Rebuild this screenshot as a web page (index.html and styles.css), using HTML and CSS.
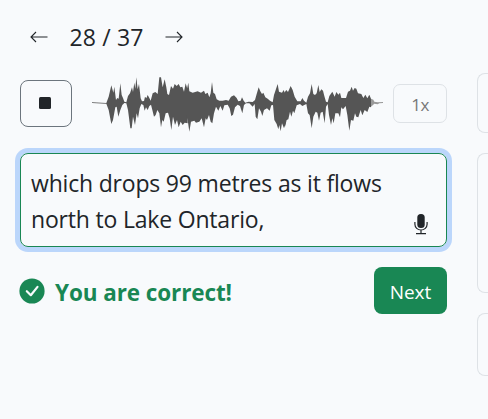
FILE: index.html
```html
<!DOCTYPE html>
<html lang="en">
<head>
<meta charset="utf-8">
<title>Dictation</title>
<link rel="stylesheet" href="styles.css">
</head>
<body>
<div class="page">
  <main class="exercise">
    <nav class="pager">
      <svg class="arrow" viewBox="0 0 18 12"><path d="M17.5 6H1M6 1L1 6l5 5"/></svg>
      <span class="count">28 / 37</span>
      <svg class="arrow" viewBox="0 0 18 12"><path d="M.5 6H17M12 1l5 5-5 5"/></svg>
    </nav>
    <div class="player">
      <button class="stop" aria-label="Stop"><span class="square"></span></button>
      <svg class="wave" viewBox="0 0 900 198">
        <path d="M12 97L55 99 62 80 70 46 76 68 79 50 84 90 88 84 92 86 97 40 101 75 105 84 109 95 115 97 120 78 126 70 132 52 135 66 139 38 142 56 145 22 149 58 153 42 158 85 162 94 168 93 171 80 175 85 179 75 184 84 188 92 194 70 202 66 209 72 214 22 219 22 224 52 230 28 235 52 238 72 243 75 249 48 255 56 260 42 266 48 272 42 277 52 283 50 288 65 293 40 299 60V160L290 158 284 165 278 155 272 172 267 150 261 165 255 140 250 180 245 145 240 128 233 130 227 155 223 150 219 172 214 130 208 120 203 135 198 140 193 120 189 104 184 108 179 120 174 112 170 122 166 105 160 102 155 115 150 145 146 130 141 165 135 140 131 175 127 175 120 120 115 100 109 99 103 105 97 120 91 140 86 110 82 112 75 150 70 162 62 120 55 101 12 99Z"/>
        <path transform="translate(294 0)" d="M0 70L7 38 10 64 20 68 35 64 45 68 54 62 58 72 65 68 70 82 74 70 78 36 82 68 87 72 92 88 100 92 110 92 120 90 128 92 135 80 144 76 152 84 157 94 164 92 168 82 173 92 178 98 188 95 200 96 207 90 212 72 218 52 223 64 228 72 232 68 238 82 245 86 252 92 260 97 264 75 269 60 275 42 279 65 288 68 293 60 299 75V160L294 175 288 160 284 184 280 165 277 178 272 162 265 150 261 105 256 106 251 122 243 115 234 120 229 138 225 125 219 115 214 148 209 140 206 102 200 110 190 100 180 100 174 105 169 130 162 108 155 104 147 112 141 134 136 138 131 115 125 104 115 106 110 122 103 108 97 122 90 110 84 130 79 160 74 155 69 135 63 150 59 145 54 172 47 145 40 155 30 158 25 152 15 155 10 185 5 150 0 135Z"/>
        <path transform="translate(588 0)" d="M0 70L7 60 12 66 20 48 26 60 32 80 40 94 50 94 55 84 60 92 67 98 72 80 78 70 83 42 88 72 93 75 98 70 103 45 107 66 112 58 117 62 121 78 126 95 131 97 136 78 145 65 152 80 157 66 163 74 168 68 172 84 186 84 192 65 198 62 203 50 207 62 212 54 217 56 222 70 232 72 238 84 244 74 250 85 256 74 261 86V112L256 110 250 126 242 120 235 136 230 120 223 142 217 140 213 130 208 152 201 150 196 182 190 135 185 108 177 118 172 112 168 142 163 130 154 130 149 160 145 145 141 165 135 135 131 102 126 110 122 160 116 125 110 128 105 152 100 128 95 125 88 140 83 175 77 135 72 130 67 102 55 108 48 102 38 106 31 130 27 122 22 140 18 125 13 148 8 150 3 170 0 165Z"/>
        <path class="pending" transform="translate(588 0)" d="M261 86L268 89 271 95 281 97 297 96V99L286 100 281 103 271 101 267 105 261 110Z"/>
      </svg>
      <button class="speed">1x</button>
    </div>
    <div class="answer">
      <p class="text">which drops 99 metres as it flows<br>north to Lake Ontario,</p>
      <svg class="mic" viewBox="0 0 14 21"><rect x="3.3" y="0" width="7.4" height="14" rx="3.5"/><path d="M.9 8v2.3a6.1 5.7 0 0 0 12.2 0V8M7 16v4M2 19.7h10"/></svg>
    </div>
    <div class="result">
      <svg class="check" viewBox="0 0 26 26"><circle cx="13" cy="13" r="12.6"/><path d="M7.8 13.2l4 4 6.7-8.3"/></svg>
      <strong class="verdict">You are correct!</strong>
      <button class="next">Next</button>
    </div>
  </main>
  <aside class="cards">
    <div class="card short"></div>
    <div class="card tall"></div>
    <div class="card medium"></div>
  </aside>
</div>
</body>
</html>
```
FILE: styles.css
```css
* { box-sizing: border-box; }
body {
  margin: 0;
  background: #f8fafc;
  color: #212529;
  font-family: "Open Sans", "Noto Sans", sans-serif;
}
button { font-family: inherit; padding: 0; background: transparent; }
.page { display: flex; gap: 30px; height: 419px; }
.exercise { width: 447px; padding: 20px 0 0 20px; flex: none; }
.pager { display: flex; align-items: center; height: 34px; padding-left: 10px; }
.arrow { width: 18px; height: 12px; fill: none; stroke: #212529; stroke-width: 1.1; }
.count { width: 74px; margin: 0 21.5px; font-size: 23px; line-height: 34px; letter-spacing: 0.15px; white-space: nowrap; }
.player { display: flex; align-items: center; height: 66px; margin-top: 16px; }
.stop {
  display: grid;
  place-items: center;
  width: 52px;
  height: 47px;
  border: 1px solid #6c757d;
  border-radius: 8px;
}
.square { width: 12px; height: 12px; border-radius: 1.5px; background: #212529; margin-right: 2px; }
.wave { width: 300px; height: 66px; margin: 0 5px 0 16px; fill: #555; }
.pending { fill: #999; }
.speed {
  width: 54px;
  height: 39px;
  padding-top: 2px;
  border: 1px solid #dee2e6;
  border-radius: 7px;
  color: #777;
  font-size: 17px;
  letter-spacing: -0.5px;
}
.answer {
  display: flex;
  align-items: flex-end;
  justify-content: space-between;
  height: 94px;
  margin-top: 17px;
  padding: 11px 18px 11px 10px;
  border: 1px solid #198754;
  border-radius: 8px;
  box-shadow: 0 0 0 5px #bbd6fb;
}
.text { margin: 0; align-self: flex-start; font-size: 23px; line-height: 36px; letter-spacing: -0.19px; white-space: nowrap; }
.mic { width: 14px; height: 21px; flex: none; fill: #212529; }
.mic path { fill: none; stroke: #212529; stroke-width: 1.2; }
.result { display: flex; align-items: center; height: 47px; margin-top: 20px; }
.check { width: 26px; height: 26px; margin-left: -1px; fill: #198754; }
.check path { fill: none; stroke: #f8fafc; stroke-width: 2.2; stroke-linecap: round; stroke-linejoin: round; }
.verdict { margin-left: 10px; padding-top: 3px; color: #198754; font-size: 22.5px; letter-spacing: -0.1px; white-space: nowrap; }
.next {
  width: 73px;
  height: 47px;
  padding-top: 2px;
  margin-left: auto;
  border: 0;
  border-radius: 8px;
  background: #198754;
  color: #fff;
  font-size: 19px;
}
.cards { display: flex; flex-direction: column; gap: 20px; padding-top: 73px; flex: 1; }
.card { border: 1px solid #dee2e6; border-right: 0; border-radius: 8px 0 0 8px; }
.short { height: 60px; }
.tall { height: 140px; }
.medium { height: 63px; }
```
